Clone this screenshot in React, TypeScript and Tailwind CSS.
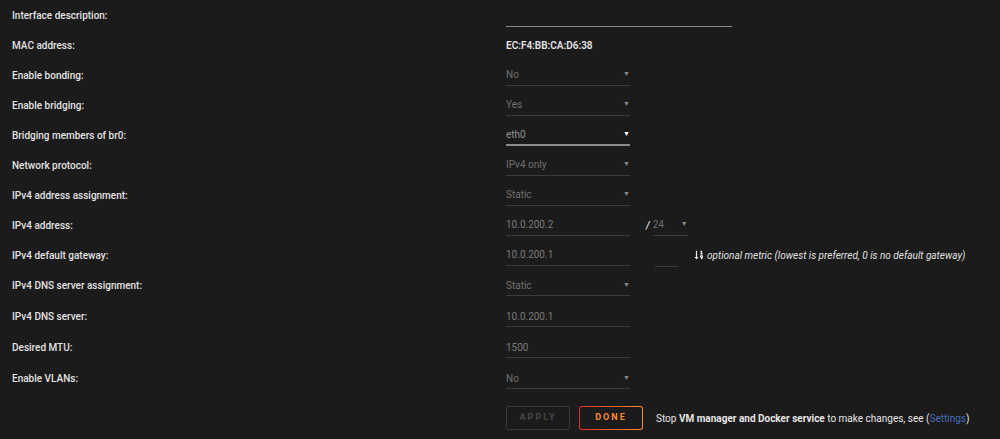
import React from 'react';
import { FaSortNumericDown } from 'react-icons/fa';

const Caret = ({ bright }: { bright?: boolean }) => (
  <span className={`text-[7px] ${bright ? 'text-white' : 'text-[#8a8a8a]'}`}>▼</span>
);

const Select = ({ value, focused, width = 'w-[124px]' }: { value: string; focused?: boolean; width?: string }) => (
  <div
    className={`${width} h-[21px] flex items-center justify-between pr-0 ${
      focused ? 'border-b-2 border-[#8c8c8c] text-[#8f8f8f]' : 'border-b border-[#3c3c3c] text-[#707070]'
    }`}
  >
    <span>{value}</span>
    <Caret bright={focused} />
  </div>
);

const Input = ({ value, width = 'w-[124px]' }: { value?: string; width?: string }) => (
  <div className={`${width} h-[21px] flex items-center border-b border-[#3c3c3c] text-[#7a7a7a]`}>
    {value}
  </div>
);

const rows: { label: string; field: React.ReactNode; tall?: boolean }[] = [
  { label: 'Interface description:', field: <div className="w-[226px] h-[23px] border-b border-[#8a8a8a]" /> },
  { label: 'MAC address:', field: <span className="text-[#e6e6e6] font-semibold">EC:F4:BB:CA:D6:38</span> },
  { label: 'Enable bonding:', field: <Select value="No" /> },
  { label: 'Enable bridging:', field: <Select value="Yes" /> },
  { label: 'Bridging members of br0:', field: <Select value="eth0" focused /> },
  { label: 'Network protocol:', field: <Select value="IPv4 only" /> },
  { label: 'IPv4 address assignment:', field: <Select value="Static" /> },
  {
    label: 'IPv4 address:',
    field: (
      <div className="flex items-center">
        <Input value="10.0.200.2" />
        <span className="ml-[16px] mr-[3px] text-[#e0e0e0] italic font-semibold">/</span>
        <Select value="24" width="w-[35px]" />
      </div>
    ),
  },
  {
    label: 'IPv4 default gateway:',
    field: (
      <div className="flex items-center">
        <Input value="10.0.200.1" />
        <div className="ml-[25px] w-[23px] h-[24px] border-b border-[#3c3c3c]" />
        <FaSortNumericDown className="ml-[16px] text-[#e6e6e6] text-[10px]" />
        <span className="ml-[3px] italic text-[#e0e0e0]">
          optional metric (lowest is preferred, 0 is no default gateway)
        </span>
      </div>
    ),
  },
  { label: 'IPv4 DNS server assignment:', field: <Select value="Static" />, tall: true },
  { label: 'IPv4 DNS server:', field: <Input value="10.0.200.1" />, tall: true },
  { label: 'Desired MTU:', field: <Input value="1500" />, tall: true },
  { label: 'Enable VLANs:', field: <Select value="No" />, tall: true },
];

export default function App() {
  return (
    <div
      className="w-[1000px] h-[439px] bg-[#1c1b1b] text-[10px] text-[#e0e0e0] overflow-hidden"
      style={{ fontFamily: 'Roboto, "Liberation Sans", sans-serif' }}
    >
      <div>
        {rows.map((r) => (
          <div key={r.label} className={`flex items-center ${r.tall ? 'h-[31px]' : 'h-[30px]'}`}>
            <div className="w-[506px] pl-[12px] font-medium text-[#e2e2e2]">{r.label}</div>
            <div className="flex items-center">{r.field}</div>
          </div>
        ))}
      </div>
      <div className="flex items-center mt-[12px] pl-[506px]">
        <button className="w-[64px] h-[24px] rounded-[3px] border border-[#3a3a3a] text-[#474747] text-[9px] font-bold tracking-[2px]">
          APPLY
        </button>
        <button className="ml-[9px] w-[64px] h-[24px] rounded-[3px] p-[1px] bg-gradient-to-r from-[#e22828] to-[#ff8c2f]">
          <span className="flex items-center justify-center w-full h-full rounded-[2px] bg-[#1c1b1b] text-[#ff8c2f] text-[9px] font-bold tracking-[2px]">
            DONE
          </span>
        </button>
        <span className="ml-[13px] text-[#e6e6e6]">
          Stop <b className="font-bold">VM manager and Docker service</b> to make changes, see (
          <span className="text-[#486dba]">Settings</span>)
        </span>
      </div>
    </div>
  );
}
